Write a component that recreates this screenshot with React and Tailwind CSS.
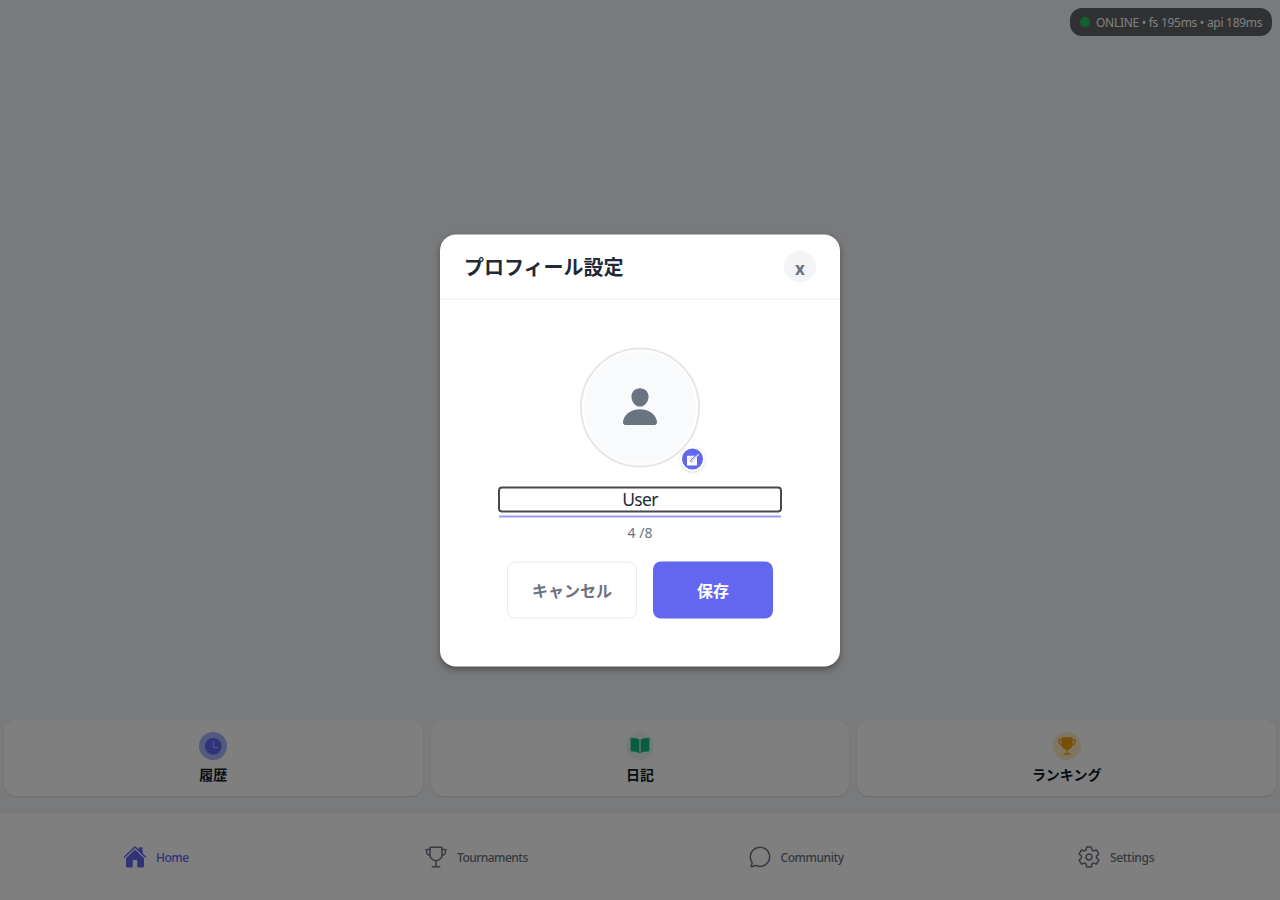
import { IoHome, IoTrophyOutline, IoTrophy, IoChatbubbleOutline, IoSettingsOutline, IoBook, IoPerson } from "react-icons/io5";

function ClockIcon() {
  return (
    <svg viewBox="0 0 20 20" className="size-5" fill="none">
      <circle cx="10.3" cy="10.3" r="8.4" fill="currentColor" />
      <path d="M10.5 5.2V11.5H14.8" stroke="#a5b4fc" strokeWidth="1" />
    </svg>
  );
}

const shortcuts = [
  { label: "履歴", Icon: ClockIcon, circle: "bg-[#a5b4fc] text-[#6366f1]" },
  { label: "日記", Icon: IoBook, circle: "bg-[#e6f4ee] text-[#10b981]" },
  { label: "ランキング", Icon: IoTrophy, circle: "bg-[#fdecc0] text-[#f59e0b]" },
];

const tabs = [
  { label: "Home", Icon: IoHome, color: "text-[#6366f1]", text: "w-[33px] tracking-[-0.5px]" },
  { label: "Tournaments", Icon: IoTrophyOutline, color: "text-[#6b7280]", text: "w-[71px] tracking-[-0.52px]" },
  { label: "Community", Icon: IoChatbubbleOutline, color: "text-[#6b7280]", text: "w-[64px] tracking-[-0.42px]" },
  { label: "Settings", Icon: IoSettingsOutline, color: "text-[#6b7280]", text: "w-[45px] tracking-[-0.32px]" },
];

function StatusPill() {
  return (
    <div className="flex h-7 w-[202px] items-center gap-[6px] whitespace-nowrap rounded-xl bg-black/60 pl-[10px] text-[12px] tracking-[-0.29px] text-white">
      <span className="size-[10px] rounded-full bg-[#22c55e]" />
      <span className="mt-[2px]">ONLINE • fs 195ms • api 189ms</span>
    </div>
  );
}

function Home() {
  return (
    <div className="flex h-[900px] w-full flex-col bg-[#f3f5f9]">
      <div className="flex flex-1 items-start justify-end p-2">
        <StatusPill />
      </div>
      <div className="mb-4 flex h-[76px] gap-[8px] px-1">
        {shortcuts.map(({ label, Icon, circle }) => (
          <div key={label} className="flex flex-1 flex-col items-center rounded-xl bg-white pt-3 shadow-[0_1px_2px_rgba(0,0,0,0.12)]">
            <div className={`flex size-7 items-center justify-center rounded-full ${circle}`}>
              <Icon size={20} />
            </div>
            <div className="mt-[5px] text-[14px] font-bold leading-5 text-[#111827]">{label}</div>
          </div>
        ))}
      </div>
      <nav className="flex h-[88px] border-t border-[#f0f1f3] bg-white">
        {tabs.map(({ label, Icon, color, text }) => (
          <div key={label} className={`flex flex-1 items-center justify-center gap-[9px] pr-2 ${color}`}>
            <Icon size={24} />
            <span className={`mt-[2px] whitespace-nowrap text-[12px] font-medium ${text}`}>{label}</span>
          </div>
        ))}
      </nav>
    </div>
  );
}

function ProfileDialog() {
  return (
    <div className="flex h-[432px] w-[400px] translate-y-[0.5px] flex-col rounded-2xl bg-white shadow-[0_3px_6px_rgba(0,0,0,0.35)]">
      <div className="flex h-[65px] items-center justify-between border-b border-[#ededee] px-6">
        <h1 className="pt-[2px] text-[20px] font-bold text-[#1f2937]">プロフィール設定</h1>
        <button className="flex size-8 items-center justify-center rounded-full bg-[#f3f4f6] pt-[3px] text-[17px] font-bold leading-none text-[#6b7280]">x</button>
      </div>
      <div className="flex flex-col items-center pt-12">
        <div className="relative flex size-[120px] items-center justify-center rounded-full border-2 border-[#e5e7eb] bg-white p-[2px]">
          <div className="flex size-full items-center justify-center rounded-full bg-[#f9fafb] pb-[3px] text-[#6b7280]">
            <IoPerson size={42} />
          </div>
          <span className="absolute -right-[7px] -bottom-[6px] flex size-[25px] items-center justify-center rounded-full border-2 border-white bg-[#6366f1] text-white shadow-[0_1px_3px_rgba(0,0,0,0.15)]">
            <svg viewBox="0 0 14 14" className="size-[14px]" fill="none">
              <path d="M1 3.2H11V13H1Z" fill="currentColor" />
              <path d="M5 9.5L6 7.2L12.8 1.7" stroke="#6366f1" strokeWidth="2.2" />
              <path d="M5.3 9L6.3 7.4L13 1.8" stroke="currentColor" strokeWidth="1.1" />
            </svg>
          </span>
        </div>
        <div className="mt-[19px] flex h-[26px] w-[284px] items-center justify-center rounded-[4px] border-2 border-[#4a4a4a] pb-[2px] text-[17.5px] tracking-[-0.7px] text-[#1f2937]">User</div>
        <div className="mt-[3px] h-[2px] w-[282px] bg-[#9799f6]" />
        <div className="mt-[5px] text-[14px] leading-5 text-[#6b7280]">4 /8</div>
        <div className="mt-[19px] flex gap-4 text-[16px] font-bold">
          <button className="h-[57px] w-[130px] rounded-lg border border-[#e9eaed] text-[#6b7280]">キャンセル</button>
          <button className="h-[57px] w-[120px] rounded-lg bg-[#6366f1] text-white">保存</button>
        </div>
      </div>
    </div>
  );
}

export default function App() {
  return (
    <div className="relative h-[900px] overflow-hidden font-['Noto_Sans','Noto_Sans_CJK_JP',sans-serif]">
      <Home />
      <div className="absolute inset-0 flex items-center justify-center bg-black/50">
        <ProfileDialog />
      </div>
    </div>
  );
}
